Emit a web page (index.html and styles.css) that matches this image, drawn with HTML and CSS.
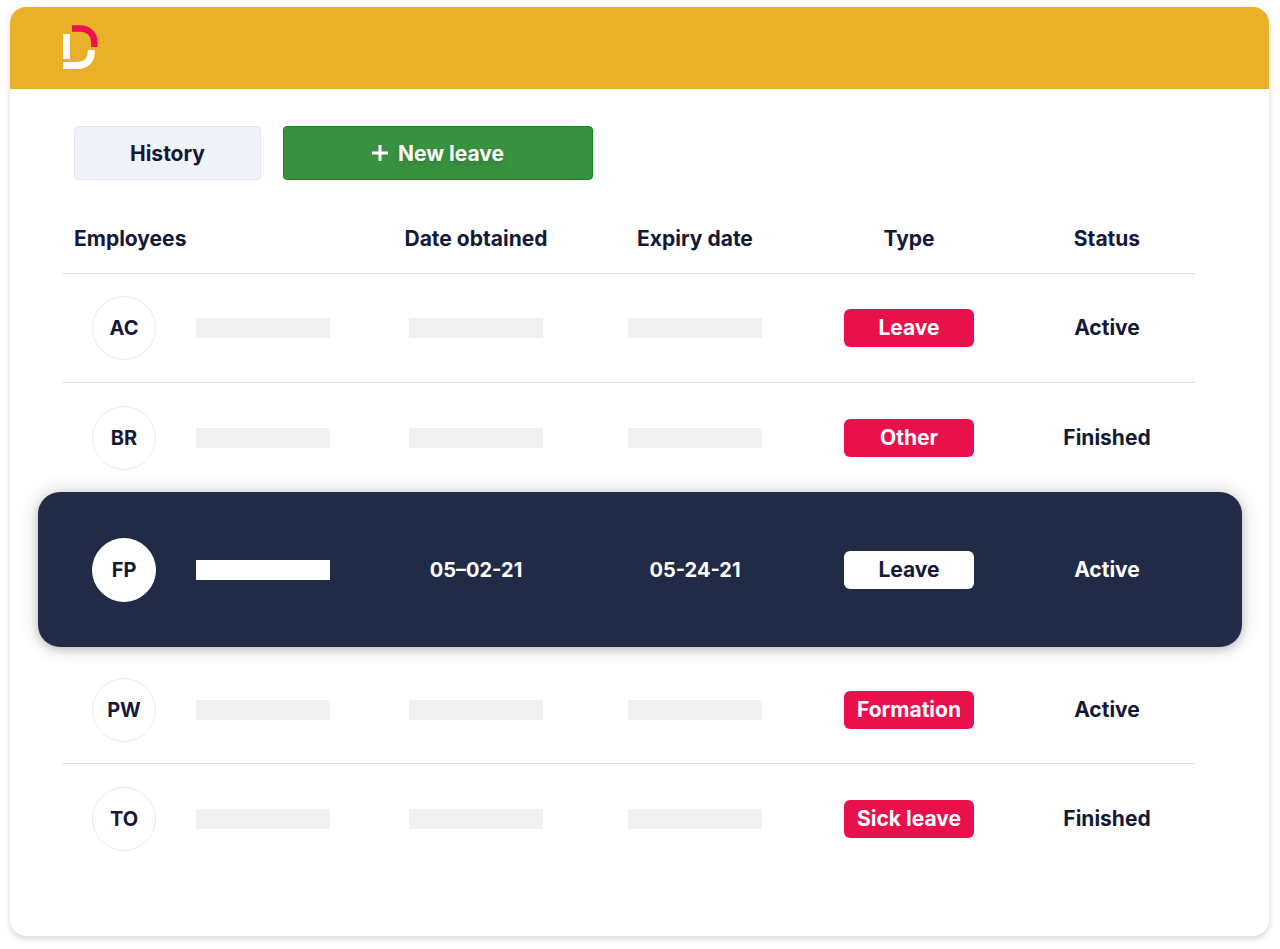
FILE: index.html
```
<!DOCTYPE html>
<html lang="en">
<head>
  <meta charset="UTF-8">
  <meta name="viewport" content="width=device-width, initial-scale=1.0">
  <title>Leaves</title>
  <link rel="stylesheet" href="styles.css">
</head>
<body>

  <div class="card">
    <header class="topbar">
      <svg class="logo" viewBox="0 0 35 44" fill="none" role="img" aria-label="Logo">
        <path d="M9 3.5H17C26 3.5 31.3 9.5 31.3 17V22" stroke="#ec114c" stroke-width="6.5"/>
        <path d="M3.5 9V34" stroke="#fff" stroke-width="7"/>
        <path d="M0 40.5H15C23 40.5 28.3 35 28.3 27V25" stroke="#fff" stroke-width="7"/>
      </svg>
    </header>

    <!-- Action Buttons -->
    <div class="toolbar">
      <button class="button history" type="button">History</button>
      <button class="button new-leave" type="button">
        <svg class="plus" viewBox="0 0 16 16" stroke="#fff" stroke-width="3" aria-hidden="true">
          <path d="M8 0V16M0 8H16"/>
        </svg>
        New leave
      </button>
    </div>

    <!-- Leave Table -->
    <table class="leaves">
      <colgroup>
        <col class="col-employee">
        <col class="col-obtained">
        <col class="col-expiry">
        <col class="col-type">
        <col class="col-status">
      </colgroup>
      <thead>
        <tr>
          <th scope="col">Employees</th>
          <th scope="col">Date obtained</th>
          <th scope="col">Expiry date</th>
          <th scope="col">Type</th>
          <th scope="col">Status</th>
        </tr>
      </thead>
      <tbody>
        <tr class="line">
          <td><div class="employee"><span class="avatar">AC</span><span class="bar"></span></div></td>
          <td><span class="bar"></span></td>
          <td><span class="bar"></span></td>
          <td><span class="badge">Leave</span></td>
          <td>Active</td>
        </tr>
        <tr>
          <td><div class="employee"><span class="avatar">BR</span><span class="bar"></span></div></td>
          <td><span class="bar"></span></td>
          <td><span class="bar"></span></td>
          <td><span class="badge">Other</span></td>
          <td>Finished</td>
        </tr>
        <tr class="selected">
          <td><div class="employee"><span class="avatar">FP</span><span class="bar"></span></div></td>
          <td class="date">05–02-21</td>
          <td class="date">05-24-21</td>
          <td><span class="badge">Leave</span></td>
          <td>Active</td>
        </tr>
        <tr class="line after-selected">
          <td><div class="employee"><span class="avatar">PW</span><span class="bar"></span></div></td>
          <td><span class="bar"></span></td>
          <td><span class="bar"></span></td>
          <td><span class="badge">Formation</span></td>
          <td>Active</td>
        </tr>
        <tr>
          <td><div class="employee"><span class="avatar">TO</span><span class="bar"></span></div></td>
          <td><span class="bar"></span></td>
          <td><span class="bar"></span></td>
          <td><span class="badge">Sick leave</span></td>
          <td>Finished</td>
        </tr>
      </tbody>
    </table>
  </div>

</body>
</html>
```
FILE: styles.css
```
* {
  margin: 0;
  padding: 0;
  box-sizing: border-box;
  font-family: Inter, "Liberation Sans", sans-serif;
}

body {
  min-height: 100vh;
  display: flex;
  padding: 7px 11px 13px 10px;
  background: #fff;
  color: #141938;
  font-size: 21px;
  font-weight: 700;
}

.card {
  flex: 1;
  background: #fff;
  border-radius: 16px;
  box-shadow: 0 3px 6px rgba(0, 0, 0, 0.16);
}

.topbar {
  height: 82px;
  display: flex;
  align-items: center;
  padding: 0 53px 2px;
  background: #ebb029;
  border-radius: 16px 16px 0 0;
}

.logo {
  width: 35px;
  height: 44px;
}

.toolbar {
  display: flex;
  gap: 22px;
  padding: 37px 64px 0;
}

.button {
  height: 54px;
  display: flex;
  justify-content: center;
  align-items: center;
  gap: 10px;
  font-size: 21px;
  font-weight: 700;
  border-radius: 4px;
  cursor: pointer;
}

.history {
  width: 187px;
  background: #f0f4f9;
  border: 1px solid #e2e6ee;
  color: #141938;
}

.new-leave {
  width: 310px;
  background: #39923f;
  border: 1px solid #0b8a12;
  color: #fff;
  text-shadow: 0 3px 6px rgba(0, 0, 0, 0.16);
}

.plus {
  width: 16px;
  height: 16px;
}

.leaves {
  width: calc(100% - 55px);
  margin: 23px 27px 0 28px;
  table-layout: fixed;
  border-collapse: separate;
  border-spacing: 0;
  text-align: center;
}

.col-employee { width: 328px; }
.col-obtained { width: 220px; }
.col-expiry { width: 218px; }
.col-type { width: 210px; }
.col-status { width: 228px; }

th {
  height: 71px;
  font-weight: 700;
}

th:first-child {
  padding-left: 36px;
  text-align: left;
}

td {
  height: 109px;
}

td:first-child {
  padding-left: 54px;
}

th:last-child,
td:last-child {
  padding-right: 42px;
}

/* Divider is inset from the table edges */
thead tr,
.line {
  background: linear-gradient(#e0e0e0, #e0e0e0) no-repeat 24px 100% / calc(100% - 71px) 1px;
}

.line td {
  padding-bottom: 2px;
}

.employee {
  display: flex;
  align-items: center;
  gap: 40px;
}

.avatar {
  width: 64px;
  height: 64px;
  display: flex;
  justify-content: center;
  align-items: center;
  border: 1px solid #ececec;
  border-radius: 50%;
  background: #fff;
  font-size: 20px;
}

.bar {
  display: block;
  width: 134px;
  height: 20px;
  margin: 0 auto;
  background: #f1f1f1;
}

.employee .bar {
  margin: 0;
}

.badge {
  display: block;
  width: 130px;
  margin: 0 auto;
  line-height: 38px;
  border-radius: 6px;
  background: #ea104b;
  color: #fff;
}

.date {
  font-size: 20px;
}

.selected {
  color: #fff;
  border-radius: 22px;
  box-shadow: 0 0 20px rgba(0, 0, 0, 0.18), 0 3px 8px rgba(0, 0, 0, 0.16);
}

.selected td {
  height: 155px;
  background: #212a47;
}

.selected td:first-child {
  border-radius: 22px 0 0 22px;
}

.selected td:last-child {
  border-radius: 0 22px 22px 0;
}

.selected .bar {
  background: #fff;
}

.selected .avatar {
  border-color: #fff;
  color: #141938;
}

.selected .badge {
  background: #fff;
  color: #141938;
}

.after-selected td {
  height: 117px;
  padding-top: 10px;
}
```
